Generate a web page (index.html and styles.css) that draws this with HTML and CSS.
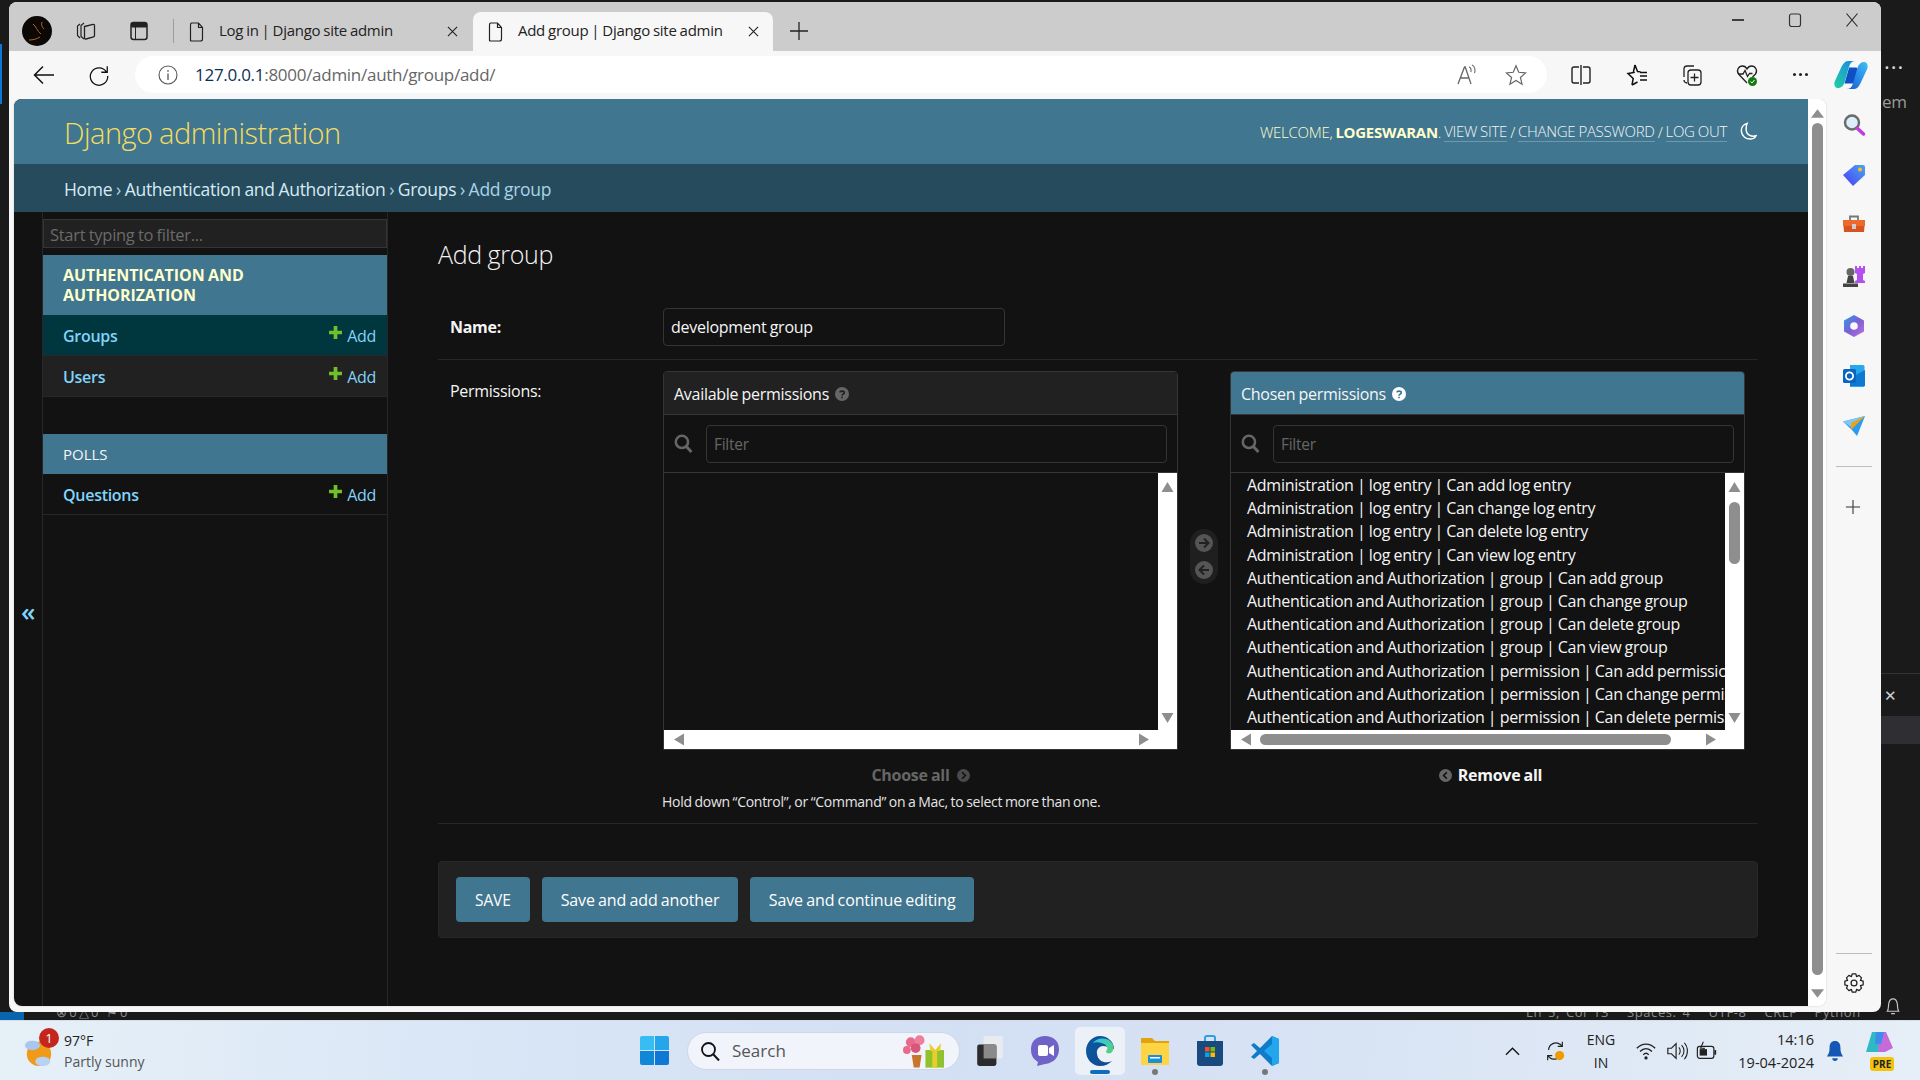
FILE: index.html
```html
<!DOCTYPE html>
<html lang="en">
<head>
<meta charset="utf-8">
<title>Add group | Django site admin</title>
<link rel="stylesheet" href="styles.css">
</head>
<body>
<div class="desktop">
  <div class="bg-statusblue"></div>
  <div class="bg-accent"></div>
  <div class="bg-status-left">⊗ 0 △ 0 &nbsp; ⚑ 0</div>
  <div class="bg-status">Ln 5, Col 13 &nbsp; Spaces: 4 &nbsp; UTF-8 &nbsp; CRLF &nbsp; Python</div>
  <div class="bg-dots">···</div>
  <div class="bg-em">em</div>
  <div class="bg-line"></div>
  <div class="bg-band"></div>
  <div class="bg-close">✕</div>
  <svg class="bg-bell" viewBox="0 0 16 20"><path d="M2 15c1.500-2 1-5 1.500-8S6 2 8 2s4 2 4.500 5 0 6 1.500 8zM6 17.500h4" fill="none" stroke="#c9c9c9" stroke-width="1.200"/></svg>

  <div class="window">
    <div class="tabstrip">
      <svg class="avatar" viewBox="0 0 30 30"><circle cx="15" cy="15" r="15" fill="#0b0805"/><path d="M7 24c4 0 8-1 11-3M11 8c3 2 4 7 8 10M20 6c-1 3 0 5 2 7" fill="none" stroke="#b3641a" stroke-width="1"/></svg>
      <svg class="ico ico-work" viewBox="0 0 24 24"><path d="M6 5 3.500 7v9.500L6 19M10 4 7 6.500v11L10 20" fill="none" stroke="#222" stroke-width="1.200"/><path d="M10.500 7.500 19 5.500a1 1 0 0 1 1.500 1v10a1.500 1.500 0 0 1-1 1.500L12 20a1.200 1.200 0 0 1-1.500-1z" fill="none" stroke="#222" stroke-width="1.300"/></svg>
      <svg class="ico ico-tabs" viewBox="0 0 24 24"><rect x="4" y="3.500" width="16" height="17" rx="2.500" fill="none" stroke="#222" stroke-width="1.500"/><path d="M4.500 5.500a2 2 0 0 1 2-2h11a2 2 0 0 1 2 2V8h-15zM8.500 8v12" fill="#222" stroke="#222" stroke-width="1"/></svg>
      <span class="tab-sep"></span>
      <div class="tab tab-plain">
        <svg class="page-ico" viewBox="0 0 16 20"><path d="M2.500 1h7l4 4.500V17a2 2 0 0 1-2 2h-9a2 2 0 0 1-1-.5V3a2 2 0 0 1 1-2zM9.500 1v4.500h4" fill="none" stroke="#222" stroke-width="1.200"/></svg>
        <span class="tab-title">Log in | Django site admin</span>
        <svg class="tab-x" viewBox="0 0 12 12"><path d="M1 1l10 10M11 1 1 11" stroke="#222" stroke-width="1.200"/></svg>
      </div>
      <div class="tab tab-active">
        <svg class="page-ico" viewBox="0 0 16 20"><path d="M2.500 1h7l4 4.500V17a2 2 0 0 1-2 2h-9a2 2 0 0 1-1-.5V3a2 2 0 0 1 1-2zM9.500 1v4.500h4" fill="none" stroke="#222" stroke-width="1.200"/></svg>
        <span class="tab-title">Add group | Django site admin</span>
        <svg class="tab-x" viewBox="0 0 12 12"><path d="M1 1l10 10M11 1 1 11" stroke="#222" stroke-width="1.200"/></svg>
      </div>
      <svg class="ico-plus" viewBox="0 0 18 18"><path d="M9 0v18M0 9h18" stroke="#222" stroke-width="1.300"/></svg>
      <div class="win-ctrl">
        <svg class="ctrl" viewBox="0 0 14 14"><path d="M1 7h12" stroke="#111" stroke-width="1.300"/></svg>
        <svg class="ctrl" viewBox="0 0 14 14"><rect x="1.500" y="1" width="11" height="12.500" rx="2" fill="none" stroke="#333" stroke-width="1.200"/></svg>
        <svg class="ctrl" viewBox="0 0 14 14"><path d="M1.500 0.500l11 13M12.500 0.500l-11 13" stroke="#222" stroke-width="1.100"/></svg>
      </div>
    </div>

    <div class="toolbar">
      <svg class="tb-back" viewBox="0 0 24 24"><path d="M22 12H3M11 3.500 2.500 12l8.500 8.500" fill="none" stroke="#111" stroke-width="1.500"/></svg>
      <svg class="tb-reload" viewBox="0 0 24 24"><path d="M20 8.500A9.500 9.500 0 1 0 21.500 13M21 2.500V9h-6.500" fill="none" stroke="#111" stroke-width="1.400"/></svg>
      <div class="address">
        <svg class="info" viewBox="0 0 20 20"><circle cx="10" cy="10" r="9" fill="none" stroke="#555" stroke-width="1.100"/><path d="M10 8.500V15M10 5v1.800" stroke="#555" stroke-width="1.300"/></svg>
        <span class="url"><b>127.0.0.1</b>:8000/admin/auth/group/add/</span>
        <svg class="addr-read" viewBox="0 0 24 24"><path d="M3 21 9.500 4h.7L16 21M5.500 15h8.500" fill="none" stroke="#666" stroke-width="1.300"/><path d="M14 4c2 .6 2.500 3 1.800 5M17 2c3 1.200 3.500 5 2.500 8" fill="none" stroke="#666" stroke-width="1.100"/></svg>
        <svg class="addr-star" viewBox="0 0 24 24"><path d="M12 2l3 7 7.500.7-5.700 5 1.800 7.300L12 18l-6.600 4 1.800-7.300-5.700-5L9 9z" fill="none" stroke="#666" stroke-width="1.300"/></svg>
      </div>
      <svg class="tb-ico tb-split" viewBox="0 0 24 24"><path d="M12 2v20M10 4H5a2 2 0 0 0-2 2v12a2 2 0 0 0 2 2h5M14 4h5a2 2 0 0 1 2 2v12a2 2 0 0 1-2 2h-5" fill="none" stroke="#222" stroke-width="1.400"/></svg>
      <svg class="tb-ico tb-favs" viewBox="0 0 24 24"><path d="M10 2l2.500 6.500 3 .2M7 22l1.200-6.500L3 10.500l6-1-.5-1L10 2M7 22l5.500-3M15 13h7M15 17h7M15 9.500h7" fill="none" stroke="#111" stroke-width="1.500"/></svg>
      <svg class="tb-ico tb-coll" viewBox="0 0 24 24"><path d="M4 14V5.500A3 3 0 0 1 7 3h7M7 20a3 3 0 0 1-3-3" fill="none" stroke="#222" stroke-width="1.300"/><rect x="8" y="7" width="13" height="15" rx="3" fill="none" stroke="#222" stroke-width="1.300"/><path d="M14.500 10.500v8M10.500 14.500h8" stroke="#222" stroke-width="1.300"/></svg>
      <svg class="tb-ico tb-health" viewBox="0 0 24 24"><path d="M12 20 3.500 11C1 7.500 3.500 3 7.500 3c2 0 3.500 1 4.500 3 1-2 2.500-3 4.500-3 4 0 6.500 4.500 4 8l-3 3M4 11h4l2-3.500 2.500 6 2-3h3" fill="none" stroke="#222" stroke-width="1.300"/><circle cx="17.500" cy="18.500" r="4.500" fill="#107c10"/><path d="M15.500 18.500l1.500 1.500 2.500-3" fill="none" stroke="#fff" stroke-width="1"/></svg>
      <div class="tb-more"><i></i><i></i><i></i></div>
      <svg class="tb-copilot" viewBox="0 0 36 32"><defs><linearGradient id="cpa" x1="0" y1="1" x2="1" y2="0"><stop offset="0" stop-color="#1fd0a0"/><stop offset="1" stop-color="#1b86e6"/></linearGradient><linearGradient id="cpb" x1="0" y1="1" x2="1" y2="0"><stop offset="0" stop-color="#1557d8"/><stop offset="1" stop-color="#3fc1f5"/></linearGradient></defs><path d="M16 8h7c2 0 3 2 2 4l-4 13H11z" fill="#0f4fc4"/><path d="M15 1h8c-4 0-6 2-7 6l-5 17c-1 4-4 6-7 6-3 0-5-4-3-8L8 7c2-4 4-6 7-6z" fill="url(#cpa)"/><path d="M21 31h-8c4 0 6-2 7-6l5-17c1-4 4-6 7-6 3 0 5 4 3 8l-7 15c-2 4-4 6-7 6z" fill="url(#cpb)"/></svg>
    </div>

    <div class="view">
      <div class="frame">
        <div class="django">
          <header class="dj-header">
            <div class="brand">Django administration</div>
            <div class="usertools">WELCOME, <strong>LOGESWARAN</strong>. <a>VIEW SITE</a> / <a>CHANGE PASSWORD</a> / <a>LOG OUT</a>
              <svg class="moon" viewBox="0 0 18 20"><path d="M7.500 1.500C3.500 2.500 1 6 1.500 10c.5 5 5 8.500 10 8 2.500-.2 4.500-1.500 5.500-3.500-5 1.500-10.500-1-10.500-7 0-2.500.2-4.500 1-6z" fill="none" stroke="#fff" stroke-width="1.600"/></svg>
            </div>
          </header>
          <div class="crumbs"><a>Home</a> › <a>Authentication and Authorization</a> › <a>Groups</a> › Add group</div>
          <div class="dj-body">
            <div class="toggle">«</div>
            <nav class="sidebar">
              <div class="nav-filter">Start typing to filter...</div>
              <div class="cap cap-strong">AUTHENTICATION AND AUTHORIZATION</div>
              <div class="nav-row nav-current"><a>Groups</a><span class="add"><svg class="plus" viewBox="0 0 14 14"><path d="M5 0h4v5h5v4H9v5H5V9H0V5h5z" fill="#70bf2b"/></svg>Add</span></div>
              <div class="nav-row nav-alt"><a>Users</a><span class="add"><svg class="plus" viewBox="0 0 14 14"><path d="M5 0h4v5h5v4H9v5H5V9H0V5h5z" fill="#70bf2b"/></svg>Add</span></div>
              <div class="cap cap-plain">POLLS</div>
              <div class="nav-row"><a>Questions</a><span class="add"><svg class="plus" viewBox="0 0 14 14"><path d="M5 0h4v5h5v4H9v5H5V9H0V5h5z" fill="#70bf2b"/></svg>Add</span></div>
            </nav>
            <main class="content">
              <h1 class="title">Add group</h1>
              <div class="row row-name">
                <label class="lbl lbl-req">Name:</label>
                <div class="inp-name">development group</div>
              </div>
              <div class="row row-perm">
                <label class="lbl lbl-perm">Permissions:</label>
                <div class="perm-col">
                  <div class="selector">
                    <div class="sel-col sel-avail">
                      <div class="sel-box">
                        <div class="sel-cap">Available permissions <svg class="help" viewBox="0 0 14 14"><circle cx="7" cy="7" r="7" fill="#666"/><path d="M4.800 5.300C5 3.800 9.300 3.600 9.300 5.700c0 1.500-2.300 1.500-2.300 3M7 9.700v1.600" fill="none" stroke="#212121" stroke-width="1.600"/></svg></div>
                        <div class="sel-filter"><svg class="mag" viewBox="0 0 18 18"><circle cx="7.500" cy="7.500" r="5.800" fill="none" stroke="#666" stroke-width="2.400"/><path d="M11.500 11.500 16.500 17" stroke="#666" stroke-width="2.800"/></svg><div class="sel-input">Filter</div></div>
                        <div class="sel-list">
                          <div class="opts"></div>
                          <div class="vbar"><svg class="sb-arrow" viewBox="0 0 12 10"><path d="M6 0l6 10H0z"/></svg><svg class="sb-arrow" viewBox="0 0 12 10"><path d="M0 0h12L6 10z"/></svg></div>
                          <div class="hbar"><svg class="sb-arrow-h" viewBox="0 0 10 12"><path d="M10 0v12L0 6z"/></svg><svg class="sb-arrow-h" viewBox="0 0 10 12"><path d="M0 0l10 6-10 6z"/></svg></div>
                          <div class="corner"></div>
                        </div>
                      </div>
                      <div class="sel-act act-off">Choose all <svg class="act-ico" viewBox="0 0 14 14"><circle cx="7" cy="7" r="7" fill="#4a4a4a"/><path d="M5.500 3.500 9 7l-3.500 3.500" fill="none" stroke="#121212" stroke-width="1.800"/></svg></div>
                    </div>
                    <div class="mover">
                      <svg class="mv" viewBox="0 0 18 18"><circle cx="9" cy="9" r="9" fill="#555"/><path d="M4 9h9M9 4.500 13.500 9 9 13.500" fill="none" stroke="#212121" stroke-width="2"/></svg>
                      <svg class="mv" viewBox="0 0 18 18"><circle cx="9" cy="9" r="9" fill="#555"/><path d="M14 9H5M9 4.500 4.500 9 9 13.500" fill="none" stroke="#212121" stroke-width="2"/></svg>
                    </div>
                    <div class="sel-col sel-chosen">
                      <div class="sel-box">
                        <div class="sel-cap cap-blue">Chosen permissions <svg class="help" viewBox="0 0 14 14"><circle cx="7" cy="7" r="7" fill="#fff"/><path d="M4.800 5.300C5 3.800 9.300 3.600 9.300 5.700c0 1.500-2.300 1.500-2.300 3M7 9.700v1.600" fill="none" stroke="#417690" stroke-width="1.600"/></svg></div>
                        <div class="sel-filter"><svg class="mag" viewBox="0 0 18 18"><circle cx="7.500" cy="7.500" r="5.800" fill="none" stroke="#666" stroke-width="2.400"/><path d="M11.500 11.500 16.500 17" stroke="#666" stroke-width="2.800"/></svg><div class="sel-input">Filter</div></div>
                        <div class="sel-list">
                          <div class="opts">
                            <div class="opt">Administration | log entry | Can add log entry</div>
                            <div class="opt">Administration | log entry | Can change log entry</div>
                            <div class="opt">Administration | log entry | Can delete log entry</div>
                            <div class="opt">Administration | log entry | Can view log entry</div>
                            <div class="opt">Authentication and Authorization | group | Can add group</div>
                            <div class="opt">Authentication and Authorization | group | Can change group</div>
                            <div class="opt">Authentication and Authorization | group | Can delete group</div>
                            <div class="opt">Authentication and Authorization | group | Can view group</div>
                            <div class="opt">Authentication and Authorization | permission | Can add permission</div>
                            <div class="opt">Authentication and Authorization | permission | Can change permission</div>
                            <div class="opt">Authentication and Authorization | permission | Can delete permission</div>
                          </div>
                          <div class="vbar"><svg class="sb-arrow" viewBox="0 0 12 10"><path d="M6 0l6 10H0z"/></svg><span class="vthumb"></span><svg class="sb-arrow" viewBox="0 0 12 10"><path d="M0 0h12L6 10z"/></svg></div>
                          <div class="hbar"><svg class="sb-arrow-h" viewBox="0 0 10 12"><path d="M10 0v12L0 6z"/></svg><span class="hthumb"></span><svg class="sb-arrow-h" viewBox="0 0 10 12"><path d="M0 0l10 6-10 6z"/></svg></div>
                          <div class="corner"></div>
                        </div>
                      </div>
                      <div class="sel-act act-on"><svg class="act-ico" viewBox="0 0 14 14"><circle cx="7" cy="7" r="7" fill="#666"/><path d="M8.500 3.500 5 7l3.500 3.500" fill="none" stroke="#121212" stroke-width="1.800"/></svg> Remove all</div>
                    </div>
                  </div>
                  <div class="help-text">Hold down “Control”, or “Command” on a Mac, to select more than one.</div>
                </div>
              </div>
              <div class="submit-row">
                <span class="btn btn-save">SAVE</span>
                <span class="btn">Save and add another</span>
                <span class="btn">Save and continue editing</span>
              </div>
            </main>
          </div>
        </div>
        <div class="page-scroll">
          <svg class="ps-arrow" viewBox="0 0 12 8"><path d="M6 0l6 8H0z"/></svg>
          <span class="ps-thumb"></span>
          <svg class="ps-arrow" viewBox="0 0 12 8"><path d="M0 0h12L6 8z"/></svg>
        </div>
      </div>
      <aside class="panel">
        <div class="p-slot"><svg class="p-ico" viewBox="0 0 24 24"><circle cx="10" cy="9.500" r="7" fill="#dbeefa" stroke="#6b6b6b" stroke-width="2.500"/><path d="M15 15l6.500 6" stroke="#c239e0" stroke-width="3.500" stroke-linecap="round"/></svg></div>
        <div class="p-slot"><svg class="p-ico" viewBox="0 0 24 24"><defs><linearGradient id="tag" x1="0" y1="1" x2="1" y2="0"><stop offset="0" stop-color="#4a3df0"/><stop offset="1" stop-color="#49a4f5"/></linearGradient></defs><path d="M13 2h8a2 2 0 0 1 2 2v8L11 23 1 12z" fill="url(#tag)"/><circle cx="18" cy="6.500" r="2" fill="#f5c518"/></svg></div>
        <div class="p-slot"><svg class="p-ico" viewBox="0 0 24 24"><path d="M8 7V3.500h8V7" fill="none" stroke="#777" stroke-width="1.800"/><path d="M1 7h22l-1 12H2z" fill="#d9531e"/><path d="M1 7h22v6H1z" fill="#ec6a2c"/><rect x="10" y="11" width="4" height="5" fill="#ccc"/></svg></div>
        <div class="p-slot"><svg class="p-ico" viewBox="0 0 24 24"><circle cx="8.500" cy="8" r="4" fill="#666"/><path d="M6 12h5l1.500 7h-8zM1 19.500h15V23H1z" fill="#444"/><path d="M13 2h2v2h2V2h2v2h2V2h2v7l-2 1v6l2 1v2H13v-2l2-1v-6l-2-1z" fill="#b44ff0"/></svg></div>
        <div class="p-slot"><svg class="p-ico" viewBox="0 0 24 24"><defs><linearGradient id="m365" x1="0" y1="0" x2="1" y2="1"><stop offset="0" stop-color="#2c9be8"/><stop offset=".5" stop-color="#7c5fd6"/><stop offset="1" stop-color="#c070dc"/></linearGradient></defs><path d="M12 1l10 5.500v11L12 23 2 17.500v-11z" fill="url(#m365)"/><circle cx="12" cy="12" r="3.800" fill="#f7f7f7"/></svg></div>
        <div class="p-slot"><svg class="p-ico" viewBox="0 0 24 24"><path d="M8 1h13a1.500 1.500 0 0 1 1.500 1.500V22a1 1 0 0 1-1 1H8z" fill="#28a8ea"/><path d="M12 12l11-6v16H8v-8z" fill="#0f78d4"/><rect x="1" y="5" width="13" height="14" rx="1.500" fill="#0a64c4"/><circle cx="7.500" cy="12" r="3.600" fill="none" stroke="#fff" stroke-width="1.800"/></svg></div>
        <div class="p-slot"><svg class="p-ico" viewBox="0 0 24 24"><path d="M1 7.500 23 2 15 22l-5-6z" fill="#2a9bf0"/><path d="M1 7.500 23 2 9 13z" fill="#7dc8f8"/><path d="M9 9 23 2 9 16z" fill="#e9a314"/></svg></div>
        <span class="p-div p-div-top"></span>
        <svg class="p-add" viewBox="0 0 18 18"><path d="M9 1v16M1 9h16" stroke="#333" stroke-width="1.200"/></svg>
        <span class="p-div p-div-bot"></span>
        <svg class="p-gear" viewBox="0 0 24 24"><circle cx="12" cy="12" r="3.200" fill="none" stroke="#222" stroke-width="1.400"/><path d="M10 2h4l.8 3 2.700-1.300 2.700 2.700L19 9.200l3 .8v4l-3 .8 1.200 2.800-2.700 2.700-2.700-1.300-.8 3h-4l-.8-3-2.700 1.300-2.700-2.700L5 14.800 2 14v-4l3-.8-1.200-2.800 2.700-2.700L9.200 5z" fill="none" stroke="#222" stroke-width="1.400" stroke-linejoin="round"/></svg>
      </aside>
    </div>
  </div>

  <footer class="taskbar">
    <div class="weather">
      <svg class="w-ico" viewBox="0 0 32 36"><circle cx="16" cy="20" r="13" fill="#f09a1a"/><ellipse cx="9" cy="11" rx="8" ry="5" fill="#a9c7ee"/><ellipse cx="20" cy="28" rx="8" ry="5" fill="#b8d2f2"/></svg>
      <span class="w-badge">1</span>
      <div class="w-text"><span class="w-temp">97°F</span><span class="w-desc">Partly sunny</span></div>
    </div>
    <svg class="winlogo" viewBox="0 0 30 30"><path d="M0 2a2 2 0 0 1 2-2h12.500v14.500H0z" fill="#37bdf2"/><path d="M15.500 0H28a2 2 0 0 1 2 2v12.500H15.500z" fill="#26a6ea"/><path d="M0 15.500h14.500V30H2a2 2 0 0 1-2-2z" fill="#1187d8"/><path d="M15.500 15.500H30V28a2 2 0 0 1-2 2H15.500z" fill="#0f78d4"/></svg>
    <div class="searchbox">
      <svg class="s-ico" viewBox="0 0 20 20"><circle cx="8.500" cy="8.500" r="6.500" fill="none" stroke="#111" stroke-width="1.800"/><path d="M13 13l6 6.500" stroke="#111" stroke-width="2"/></svg>
      <span class="s-text">Search</span>
      <svg class="s-gift" viewBox="0 0 44 36"><path d="M10 22h10l-2 13h-6z" fill="#c9752c"/><circle cx="9" cy="9" r="5" fill="#e86a8c"/><circle cx="18" cy="7" r="5" fill="#ec7f9c"/><circle cx="14" cy="15" r="5" fill="#d9557c"/><circle cx="5" cy="17" r="4" fill="#e86a8c"/><rect x="24" y="17" width="19" height="18" fill="#8fc22c"/><rect x="31" y="17" width="5" height="18" fill="#e7cd2e"/><path d="M28 10l6 7 6-7-1 8H29z" fill="#e7cd2e"/></svg>
    </div>
    <div class="task-apps">
      <div class="app"><svg class="app-ico" viewBox="0 0 28 30"><rect x="8" y="1" width="18" height="21" rx="2" fill="#e9ecef"/><rect x="2" y="9" width="18" height="20" rx="2" fill="#2b2b2b"/><path d="M8 9h12v13H8z" fill="#8a8a8a"/></svg></div>
      <div class="app"><svg class="app-ico" viewBox="0 0 30 32"><path d="M15 1c8 0 14 5 14 13s-5 14-14 15l-8 2 1-4C3 24 1 20 1 14 1 6 7 1 15 1z" fill="#6f63c8"/><rect x="8" y="10" width="10" height="11" rx="2" fill="#fff"/><path d="M19 13l5-3v11l-5-3z" fill="#fff"/></svg></div>
      <div class="app app-active"><svg class="app-ico app-edge" viewBox="0 0 30 32"><defs><linearGradient id="edg" x1="0" y1="0" x2="1" y2="1"><stop offset="0" stop-color="#0c59a4"/><stop offset="1" stop-color="#114a8b"/></linearGradient><linearGradient id="edg2" x1="0" y1="0" x2="1" y2="1"><stop offset="0" stop-color="#35c1f1"/><stop offset="1" stop-color="#5ad36a"/></linearGradient></defs><path d="M15 1C7 1 1 8 1 16c0 8 6 15 14 15 5 0 9-2 12-5-6 3-14 1-15-7-1-5 3-8 6-8 5 0 9 3 11 3 0-7-6-13-14-13z" fill="url(#edg)"/><path d="M8 8c3-5 14-7 19 0 2 3 2 8-1 10-3 1-5 0-5-2 2-1 2-5-2-7-4-2-9-2-11-1z" fill="url(#edg2)"/></svg><span class="app-under"></span></div>
      <div class="app"><svg class="app-ico" viewBox="0 0 30 32"><path d="M1 3h11l3 3h14v4H1z" fill="#e0a30f"/><path d="M1 8h28v22H1z" fill="#fcd444"/><rect x="8" y="20" width="14" height="8" rx="1" fill="#1a8fe0"/><rect x="10" y="22" width="10" height="1.500" fill="#fff"/></svg><span class="app-dot"></span></div>
      <div class="app"><svg class="app-ico" viewBox="0 0 30 32"><path d="M10 7V3a2 2 0 0 1 2-2h6a2 2 0 0 1 2 2v4" fill="none" stroke="#2f9fe0" stroke-width="2"/><path d="M2 6h26v22a3 3 0 0 1-3 3H5a3 3 0 0 1-3-3z" fill="#184a80"/><rect x="10" y="12" width="4.500" height="4.500" fill="#f25022"/><rect x="15.500" y="12" width="4.500" height="4.500" fill="#7fba00"/><rect x="10" y="17.500" width="4.500" height="4.500" fill="#00a4ef"/><rect x="15.500" y="17.500" width="4.500" height="4.500" fill="#ffb900"/></svg></div>
      <div class="app"><svg class="app-ico" viewBox="0 0 30 32"><path d="M22 1 10 13 4 8 1 10l6 6-6 6 3 2 6-5 12 12 7-3V4z" fill="#0e7cc9"/><path d="M22 1l7 3v24l-7 3zM22 9l-8 7 8 7z" fill="#22a6ee"/></svg><span class="app-dot"></span></div>
    </div>
    <div class="tray">
      <svg class="tray-ico tray-chev" viewBox="0 0 16 10"><path d="M1 9l7-7 7 7" fill="none" stroke="#111" stroke-width="1.400"/></svg>
      <svg class="tray-ico tray-sync" viewBox="0 0 24 24"><path d="M5 11a8 8 0 0 1 13-6l2 2M20 2v5h-5M19 14a8 8 0 0 1-13 5l-2-2M4 22v-5h5" fill="none" stroke="#222" stroke-width="1.300"/><circle cx="17" cy="17" r="5" fill="#f09a00"/></svg>
      <div class="tray-lang"><span>ENG</span><span>IN</span></div>
      <svg class="tray-ico tray-wifi" viewBox="0 0 24 20"><path d="M2 7c6-6 14-6 20 0M5.500 10.500c4-4 9-4 13 0M9 14c2-2 4-2 6 0" fill="none" stroke="#222" stroke-width="1.500"/><circle cx="12" cy="17.500" r="1.800" fill="#222"/></svg>
      <svg class="tray-ico tray-vol" viewBox="0 0 24 24"><path d="M2 9h4l5-5v16l-5-5H2z" fill="none" stroke="#222" stroke-width="1.300"/><path d="M14 8c2 2 2 6 0 8M17 5.500c3.500 3.500 3.500 9.500 0 13M20 3c4.500 5 4.500 13 0 18" fill="none" stroke="#222" stroke-width="1.200"/></svg>
      <svg class="tray-ico tray-bat" viewBox="0 0 24 22"><rect x="1.500" y="6" width="18" height="13" rx="2.500" fill="none" stroke="#222" stroke-width="1.300"/><rect x="4" y="9" width="8" height="7" fill="#222"/><path d="M21 10v5" stroke="#222" stroke-width="2"/><path d="M8 1 5 8h4l-2 6" fill="none" stroke="#222" stroke-width="1.200"/></svg>
      <div class="clock"><span>14:16</span><span>19-04-2024</span></div>
      <svg class="tray-bell" viewBox="0 0 20 24"><path d="M10 1c-4 0-6 3-6 7 0 5-1 7-3 10h18c-2-3-3-5-3-10 0-4-2-7-6-7z" fill="#1458b4"/><path d="M7 20a3 3 0 0 0 6 0z" fill="#1458b4"/></svg>
      <div class="tray-cop"><svg class="tray-cop-ico" viewBox="0 0 30 30"><path d="M8 2h10L14 22H2z" fill="#2eb9c5"/><path d="M16 2h6l7 16-8 4h-7z" fill="#c56ad9"/><path d="M12 2h8l-3 12h-6z" fill="#3b8ded"/></svg><span class="pre">PRE</span></div>
    </div>
  </footer>
</div>
</body>
</html>
```
FILE: styles.css
```css
* { box-sizing: border-box; }
html, body { margin: 0; padding: 0; }
body { font-family: "Open Sans", "Noto Sans", sans-serif; font-stretch: 88%; letter-spacing: -.28px; word-spacing: -.6px; }
svg { display: block; flex: none; }

.desktop { position: relative; width: 1920px; height: 1080px; overflow: hidden; background: #1a1a1a; }
.bg-statusblue { position: absolute; left: 0; top: 1012px; width: 24px; height: 8px; background: #0a63ad; }
.bg-accent { position: absolute; left: 0; top: 44px; width: 2px; height: 60px; background: #0a78d4; }
.bg-status-left { position: absolute; left: 56px; top: 1004px; font-size: 13px; color: #8a8a8a; white-space: nowrap; line-height: 16px; }
.bg-status { position: absolute; left: 1526px; top: 1004px; font-size: 13px; color: #8a8a8a; white-space: nowrap; line-height: 16px; letter-spacing: .6px; word-spacing: 2px; }
.bg-dots { position: absolute; left: 1884px; top: 52px; color: #ddd; font-size: 22px; line-height: 28px; letter-spacing: 1px; }
.bg-em { position: absolute; left: 1882px; top: 90px; color: #9a9a9a; font-size: 17px; line-height: 24px; }
.bg-line { position: absolute; left: 1881px; top: 673px; width: 39px; height: 1px; background: #333; }
.bg-band { position: absolute; left: 1881px; top: 716px; width: 39px; height: 28px; background: #2e2e33; }
.bg-close { position: absolute; left: 1884px; top: 684px; width: 16px; color: #c9d4dc; font-size: 15px; line-height: 22px; }
.bg-bell { position: absolute; left: 1885px; top: 997px; width: 16px; height: 19px; }

.window { position: absolute; left: 9px; top: 2px; width: 1872px; height: 1010px; background: #f7f7f7; border-radius: 8px; overflow: hidden; display: flex; flex-direction: column; }

.tabstrip { height: 49px; background: #ccc; display: flex; align-items: center; padding-left: 13px; flex: none; position: relative; }
.avatar { width: 30px; height: 30px; margin-bottom: -9px; }
.ico { width: 24px; height: 24px; margin-top: 9px; }
.ico-work { margin-left: 22px; }
.ico-tabs { margin-left: 29px; }
.tab-sep { width: 1px; height: 24px; background: #9c9c9c; margin: 9px 0 0 22px; }
.tab { height: 39px; margin-top: 10px; display: flex; align-items: center; font-size: 15px; color: #222; }
.tab-plain { width: 288px; margin-left: 9px; padding: 0 8px 0 6px; }
.tab-active { width: 300px; margin-left: 2px; background: #f7f7f7; border-radius: 8px 8px 0 0; padding: 0 9px 0 15px; }
.page-ico { width: 16px; height: 20px; }
.tab-title { margin-left: 14px; flex: 1; white-space: nowrap; padding-bottom: 4px; }
.tab-x { width: 11px; height: 13px; margin-right: 5px; }
.ico-plus { width: 18px; height: 18px; margin: 9px 0 0 17px; }
.win-ctrl { margin-left: auto; display: flex; gap: 43px; padding-right: 22px; align-self: flex-start; padding-top: 11px; }
.ctrl { width: 14px; height: 14px; }

.toolbar { height: 48px; flex: none; display: flex; align-items: center; padding-bottom: 1px; background: #f7f7f7; position: relative; }
.tb-back { width: 24px; height: 24px; margin-left: 23px; }
.tb-reload { width: 22px; height: 24px; margin-left: 32px; }
.address { width: 1412px; height: 37px; margin-left: 25px; background: #fff; border-radius: 19px; display: flex; align-items: center; padding-left: 23px; }
.info { width: 20px; height: 20px; }
.url { margin-left: 17px; font-size: 17px; color: #666; white-space: nowrap; }
.url b { font-weight: 400; color: #0d2f55; }
.addr-read { width: 24px; height: 24px; margin-left: auto; }
.addr-star { width: 22px; height: 22px; margin: 0 20px 0 26px; }
.tb-ico { width: 24px; height: 24px; }
.tb-split { margin-left: 22px; }
.tb-favs { margin-left: 32px; }
.tb-coll { margin-left: 31px; }
.tb-health { margin-left: 31px; }
.tb-more { display: flex; gap: 3px; margin-left: 34px; }
.tb-more i { width: 3px; height: 3px; background: #222; border-radius: 50%; }
.tb-copilot { width: 34px; height: 30px; margin-left: 26px; }

.view { flex: 1; display: flex; min-height: 0; }
.frame { width: 1812px; margin-left: 5px; height: 907px; display: flex; border-radius: 8px; overflow: hidden; background: #fff; box-shadow: 0 0 2px rgba(0,0,0,.2); }
.django { width: 1794px; display: flex; flex-direction: column; background: #121212; color: #f5f5f5; overflow: hidden; }

.dj-header { height: 65px; flex: none; background: #417690; padding: 0 51px 0 50px; display: flex; align-items: center; justify-content: space-between; }
.brand { font-size: 29px; font-weight: 300; color: #f5dd5d; letter-spacing: -.5px; white-space: nowrap; margin-top: 2px; }
.usertools { display: flex; align-items: center; font-size: 15px; font-weight: 300; color: #ffc; white-space: pre; }
.usertools strong { font-weight: 700; color: #ffffcc; }
.usertools a { color: #f5f5f5; border-bottom: 1px solid rgba(255,255,255,.25); }
.moon { width: 17px; height: 19px; margin-left: 13px; }
.crumbs { height: 48px; flex: none; background: #264b5d; padding: 2px 0 0 50px; display: flex; align-items: center; font-size: 17.500px; color: #a9d3e6; white-space: pre; }
.crumbs a { color: #d6eaf4; }

.dj-body { flex: 1; display: flex; min-height: 0; }
.toggle { width: 28px; flex: none; display: flex; align-items: center; justify-content: center; color: #81d4fa; font-size: 26px; font-weight: 600; padding-top: 4px; }
.sidebar { width: 346px; flex: none; border-left: 1px solid #272727; border-right: 1px solid #272727; padding-top: 7px; }
.nav-filter { height: 29px; margin-bottom: 7px; background: #212121; border: 1px solid #353535; color: #6a6a6a; font-size: 16.500px; line-height: 29px; padding-left: 6px; }
.cap { background: #417690; padding-left: 20px; padding-right: 60px; }
.cap-strong { height: 60px; padding-top: 10px; font-size: 16px; line-height: 20px; font-weight: 700; color: #ffffcc; letter-spacing: -.08px; }
.cap-plain { height: 40px; margin-top: 37px; font-size: 15px; line-height: 40px; color: #f5f5f5; letter-spacing: 0; }
.nav-row { height: 41px; padding: 2px 11px 0 20px; display: flex; align-items: center; justify-content: space-between; font-size: 16px; color: #81d4fa; border-bottom: 1px solid #272727; }
.nav-row a { font-weight: 600; }
.nav-current { background: #00363d; }
.nav-alt { background: #212121; }
.add { display: flex; align-items: center; }
.plus { width: 13px; height: 13px; margin: 0 5px 7px 0; }

.content { flex: 1; padding: 0 50px; min-width: 0; }
.title { margin: 0; padding-top: 25px; height: 96px; font-size: 25px; font-weight: 300; line-height: 34px; color: #f5f5f5; }
.row { display: flex; border-bottom: 1px solid #272727; padding-left: 12px; }
.row-name { height: 52px; }
.lbl { width: 213px; flex: none; font-size: 16px; color: #f5f5f5; }
.lbl-req { font-weight: 700; line-height: 38px; }
.lbl-perm { padding-top: 9px; line-height: 22px; }
.inp-name { width: 342px; height: 38px; border: 1px solid #353535; border-radius: 4px; font-size: 16px; line-height: 36px; padding-left: 7px; color: #f5f5f5; }
.row-perm { height: 464px; padding-top: 11px; }
.perm-col { flex: 1; }
.selector { display: flex; }
.sel-col { display: flex; flex-direction: column; }
.sel-avail { width: 515px; }
.sel-chosen { width: 515px; }
.sel-box { height: 379px; border: 1px solid #353535; border-radius: 4px 4px 0 0; display: flex; flex-direction: column; overflow: hidden; }
.sel-cap { height: 43px; flex: none; background: #212121; border-bottom: 1px solid #353535; padding: 1px 0 0 10px; display: flex; align-items: center; gap: 9px; font-size: 16px; white-space: pre; }
.cap-blue { background: #417690; color: #f5f5f5; }
.help { width: 14px; height: 14px; margin-left: -6px; }
.sel-filter { height: 58px; flex: none; border-bottom: 1px solid #353535; display: flex; align-items: center; padding: 0 10px; }
.mag { width: 19px; height: 19px; }
.sel-input { flex: 1; height: 38px; margin-left: 13px; border: 1px solid #353535; border-radius: 4px; color: #666; font-size: 15.500px; line-height: 36px; padding-left: 7px; }
.sel-list { flex: 1; display: grid; grid-template-columns: 1fr 19px; grid-template-rows: 1fr 19px; min-height: 0; }
.opts { overflow: hidden; padding: 1px 0 0 16px; min-width: 0; }
.opt { height: 23.200px; line-height: 23.200px; font-size: 16px; color: #f5f5f5; white-space: nowrap; }
.vbar { background: #fff; display: flex; flex-direction: column; align-items: center; justify-content: space-between; padding: 9px 0 7px; fill: #8e8e8e; }
.hbar { background: #fff; display: flex; align-items: center; justify-content: space-between; padding: 0 9px 0 10px; fill: #8e8e8e; }
.corner { background: #fff; }
.sb-arrow { width: 13px; height: 10px; }
.sb-arrow-h { width: 10px; height: 13px; }
.vthumb { width: 11px; height: 62px; background: #8e8e8e; border-radius: 6px; margin-top: 10px; margin-bottom: auto; }
.hthumb { width: 411px; height: 11px; background: #8e8e8e; border-radius: 6px; margin-left: 9px; margin-right: auto; }
.sel-act { height: 51px; display: flex; align-items: center; justify-content: center; font-size: 16px; font-weight: 700; gap: 7px; padding-bottom: 1px; }
.act-off { color: #666; }
.act-on { color: #f5f5f5; padding-left: 6px; gap: 6px; }
.act-ico { width: 13px; height: 13px; }
.mover { width: 28px; height: 55px; margin: 158px 12px 0 12px; background: #1f1f1f; border-radius: 14px; display: flex; flex-direction: column; align-items: center; justify-content: space-between; padding: 5px 0; }
.mv { width: 18px; height: 18px; }
.help-text { font-size: 14px; color: #e5e5e5; line-height: 20px; margin-top: -9px; margin-left: -1px; }

.submit-row { margin-top: 37px; height: 77px; background: #212121; border-radius: 4px; border: 1px solid #272727; padding: 15px 17px; display: flex; gap: 12.500px; }
.btn { height: 45px; background: #417690; border-radius: 4px; color: #fff; font-size: 16px; line-height: 46px; padding: 0 18.500px; white-space: nowrap; letter-spacing: -.12px; word-spacing: -.8px; }
.btn-save { font-size: 15.500px; padding: 0 19px; }

.page-scroll { width: 18px; flex: none; background: #fff; display: flex; flex-direction: column; align-items: center; padding: 10px 0 8px; fill: #8e8e8e; }
.ps-arrow { width: 13px; height: 9px; }
.ps-thumb { width: 11px; flex: 1; background: #8e8e8e; border-radius: 6px; margin: 5px 0 14px; }

.panel { flex: 1; display: flex; flex-direction: column; align-items: center; padding-top: 1px; }
.p-slot { height: 50.200px; width: 100%; display: flex; align-items: center; justify-content: center; flex: none; }
.p-ico { width: 24px; height: 24px; }
.p-div { width: 36px; height: 1px; background: #bdbdbd; flex: none; }
.p-div-top { margin-top: 15px; }
.p-add { width: 16px; height: 16px; margin-top: 32px; margin-left: -2px; }
.p-div-bot { margin-top: auto; }
.p-gear { width: 22px; height: 22px; margin: 18px 0 18px; }

.taskbar { position: absolute; left: 0; top: 1020px; width: 1920px; height: 60px; background: linear-gradient(95deg, #e6f0f7 0%, #d9e6f6 25%, #d3dff3 50%, #d8e3f4 70%, #e6eff7 100%); border-top: 1px solid #d5dde5; display: flex; align-items: center; color: #222; letter-spacing: 0; word-spacing: 0; }
.weather { width: 640px; flex: none; display: flex; align-items: center; padding-left: 24px; position: relative; }
.w-ico { width: 30px; height: 36px; margin-top: 2px; }
.w-badge { position: absolute; left: 39px; top: -2px; width: 20px; height: 20px; border-radius: 50%; background: #c4261d; color: #fff; font-size: 13px; line-height: 20px; text-align: center; }
.w-text { display: flex; flex-direction: column; margin-left: 10px; font-size: 14px; line-height: 21px; }
.w-desc { color: #555; }
.winlogo { width: 29px; height: 29px; }
.searchbox { width: 273px; height: 38px; margin: 0 2px 0 18px; background: #f1f4fb; border-radius: 19px; border: 1px solid #d0d6e2; display: flex; align-items: center; padding-left: 12px; }
.s-ico { width: 20px; height: 20px; }
.s-text { margin-left: 12px; font-size: 17px; color: #555; }
.s-gift { width: 43px; height: 36px; margin-left: auto; margin-right: 14px; }
.task-apps { display: flex; }
.app { width: 55px; height: 48px; display: flex; align-items: center; justify-content: center; position: relative; }
.app-active { background: #ecf1f8; border-radius: 5px; width: 50px; margin: 0 2.500px; }
.app-ico { width: 30px; height: 32px; }
.app-under { position: absolute; left: 15px; bottom: 1px; width: 20px; height: 4px; border-radius: 2px; background: #0f6cbd; }
.app-dot { position: absolute; left: 25px; bottom: 0; width: 6px; height: 6px; border-radius: 50%; background: #777; }
.tray { margin-left: 213px; flex: 1; display: flex; align-items: center; }
.tray-ico { width: 22px; height: 22px; }
.tray-chev { width: 15px; height: 10px; }
.tray-sync { margin-left: 24px; }
.tray-lang { width: 50px; margin-left: 10px; display: flex; flex-direction: column; align-items: center; font-size: 14px; line-height: 23px; }
.tray-wifi { margin-left: 9px; }
.tray-vol { margin-left: 9px; }
.tray-bat { margin-left: 8px; }
.clock { width: 96px; display: flex; flex-direction: column; align-items: flex-end; font-size: 14.500px; line-height: 23px; }
.tray-bell { width: 18px; height: 22px; margin-left: 12px; }
.tray-cop { width: 30px; height: 42px; margin-left: 20px; position: relative; }
.tray-cop-ico { width: 30px; height: 30px; }
.pre { position: absolute; left: 6px; top: 27px; width: 24px; height: 14px; background: #f4c20d; border-radius: 3px; color: #222; font-size: 10px; font-weight: 700; line-height: 14px; text-align: center; }
```
